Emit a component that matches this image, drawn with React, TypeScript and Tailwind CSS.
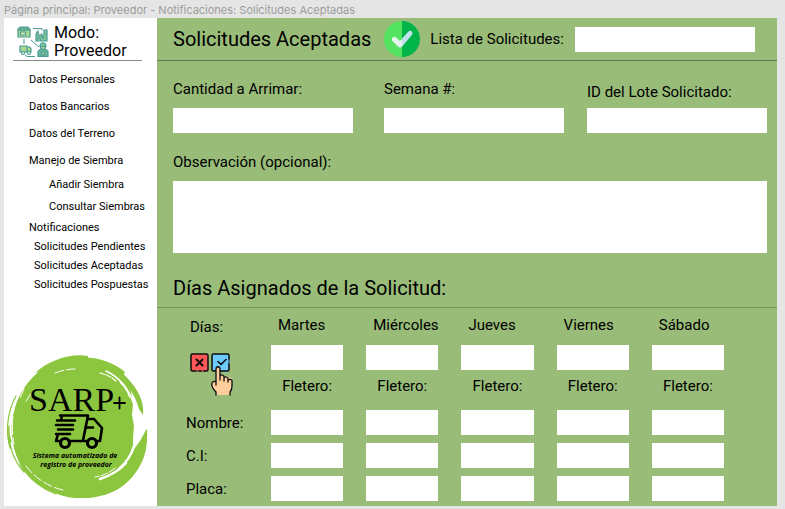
import React from "react";

const days = ["Martes", "Miércoles", "Jueves", "Viernes", "Sábado"];
const rows = ["Nombre:", "C.I:", "Placa:"];

const inputClass = "block h-[25px] w-full bg-white px-2 text-sm outline-none";

function SupplyIcon() {
  return (
    <svg viewBox="0 0 32 32" className="h-8 w-8 shrink-0" fill="#a9d88f" stroke="#4a9c95" strokeWidth="1.2" aria-hidden="true">
      <path d="M1 3h12v8H1z" />
      <path d="M1 4l2-3h8l2 3zM4 1v4M7 1v4M10 1v4" fill="#7dc49a" />
      <path d="M3.500 6h5v3h-5z" fill="#d9efb0" />
      <path d="M19 15V8l2-3 1 5 3-2v3l2-1V4h3v11z" fill="#7dc49a" />
      <path d="M21 15v-3h2v3M25 12h2" fill="#d9efb0" />
      <path d="M3 20h7v6H3zM10 21h3l1 2v3h-4z" />
      <circle cx="6" cy="27" r="1.500" fill="#fff" />
      <circle cx="12" cy="27" r="1.500" fill="#fff" />
      <path d="M21 30.500v-5l2-2h6l2 2v5z" fill="#6bb79a" />
      <circle cx="26" cy="21" r="2.500" />
      <path d="M23 20.500c0-5 6-5 6 0z" fill="#7dc49a" />
      <path d="M24.500 26h3v3h-3z" />
      <path d="M16 2.500h9v2M7 13v5M14 14l8 7M8 29l2 1.500h8" fill="none" strokeWidth="1" />
    </svg>
  );
}

function CheckBadge() {
  return (
    <svg viewBox="0 0 36 36" className="h-9 w-9 shrink-0" aria-hidden="true">
      <path d="M18 0a18 18 0 0 0 0 36z" fill="#54e360" />
      <path d="M18 0a18 18 0 0 1 0 36z" fill="#00b44a" />
      <path
        d="M18 18.500v7.300c-1.500 1.200-3 .8-4.200-.4l-5.200-5.200c-2.400-2.600 1-6 3.600-3.700l3.400 3.200z"
        fill="#e4f3ee"
      />
      <path d="M18 25.800v-8.300l6.500-7c2.500-2 5.300 1 3.300 3.500z" fill="#c3e1ea" />
    </svg>
  );
}

function ChooseIcon() {
  return (
    <svg viewBox="0 0 43 44" className="h-11 w-[43px]" stroke="#0b0b0b" strokeLinecap="round" strokeLinejoin="round" aria-hidden="true">
      <rect x="1" y="2" width="17" height="17" rx="1.500" fill="#ff5658" strokeWidth="1.500" />
      <path d="M6.500 7.500l6 6M12.500 7.500l-6 6" strokeWidth="2" />
      <rect x="22" y="2" width="17" height="17" rx="1.500" fill="#6dcbfb" strokeWidth="1.500" />
      <path d="M28 9.500l3 3 5-5" fill="none" strokeWidth="1.600" />
      <path d="M7 19h1M12 19h1" stroke="#ff8d8d" />
      <path d="M39 8v3M35 20.500h1" stroke="#6dcbfb" />
      <path d="M26 43v-3c-3-3-5-6-4-9 1-2 3-2 4-1V17c0-3 4-3 4 0v7c1-2 4-1 4 1 1-2 4-1 4 1 1-1 4-1 4 2v6c0 3-1 5-2 6v3z" fill="#fdcd9c" stroke="none" />
      <path d="M26 43v-3c-3-3-5-6-4-9 1-2 3-2 4-1v3-16c0-3 4-3 4 0v11-4c1-2 4-1 4 1v4-3c1-2 4-1 4 1v3-2c1-1 4-1 4 1v5c0 3-1 5-2 6v3" fill="none" strokeWidth="1.300" />
    </svg>
  );
}

function Logo() {
  return (
    <svg viewBox="0 0 144 144" className="h-36 w-36" role="img" aria-label="SARP+">
      <g fill="#8cc63e">
        <path d="M72 4c17-2 35 4 47 14l-2 4c4 5 7 10 8 16l2 12-1 11 2 11-1 12 1 10-5 11c-1 7-6 13-10 19-9 9-20 15-34 17-16 3-32-1-45-9C18 122 8 103 6 82 4 60 12 38 27 23 39 11 55 5 72 4z" />
        <path d="M92 7c16 3 29 14 38 28 5 8 8 16 7 26l-4-6c-3-11-8-20-16-28-7-8-15-13-25-16z" />
        <path d="M140 76l1-1c1 17-2 31-11 43-9 13-21 21-36 24-15 4-33 3-47-4l26-4c16-1 33-13 43-24 6-4 10-8 12-15l6-8z" />
        <path d="M82 2c-18-3-40 5-53 17l14-4c12-6 24-10 39-10z" />
      </g>
      <g fill="none" stroke="#8cc63e" strokeLinecap="round">
        <path d="M10 42C0 60 0 80 4 94M3 72c-1 18 4 34 15 46M14 110c8 14 22 25 36 30M2 75l3 13" strokeWidth="1.200" />
      </g>
      <g fill="none" stroke="#fff" strokeLinecap="round">
        <path d="M100 17c13 6 22 17 27 31" strokeWidth="1.500" />
        <path d="M114 28c5 5 8 10 10 16M94 19c8 2 13 5 17 9" strokeWidth="1.200" strokeDasharray="5 1.500" />
        <path d="M127 46c4 14 4 30 1 44" strokeWidth="2" />
        <path d="M130 54c3 12 2 23 0 33" strokeWidth="4" />
        <path d="M128 92c-3 10-8 17-15 23M120 109c-8 9-17 13-26 16" strokeWidth="2.500" />
        <path d="M109 114c-7 6-14 8-20 9" strokeWidth="1" strokeDasharray="7 2" />
        <path d="M12 42C6 56 5 74 8 90" strokeWidth="1" strokeDasharray="18 3" />
        <path d="M20 112c10 13 23 21 37 24M18 35l-4 9M49 19c8-3 14-4 20-4M20 47l6-9" strokeWidth="1" strokeDasharray="9 3" />
      </g>
      <g fill="#000">
        <text x="23" y="57" fontSize="34" fontFamily="'Liberation Serif', serif">SARP</text>
        <g fontSize="7" fontWeight="700" fontStyle="italic" fontFamily="'Open Sans', sans-serif" textAnchor="middle">
          <text x="69" y="104">Sistema automatizado de</text>
          <text x="70" y="113">registro de proveedor</text>
        </g>
      </g>
      <g fill="none" stroke="#000" strokeLinejoin="round" strokeLinecap="round">
        <path d="M108 49h11M113.500 43.500v11" strokeWidth="1.800" />
        <path d="M54 61.500h28l-5 25M51 66.500h18M50 71h17M52 75.500h15M50 80h14M56 62l-1 4M52 80l-2 7h4M64 87h17M82 65h6l8 9-2 13h-3M80 73.500h7" strokeWidth="2.600" />
        <circle cx="59" cy="89" r="4.500" strokeWidth="3.200" />
        <circle cx="86" cy="89" r="4.500" strokeWidth="3.200" />
      </g>
    </svg>
  );
}

function NavLink({ children }: { children: React.ReactNode }) {
  return (
    <a href="#" className="block whitespace-nowrap">
      {children}
    </a>
  );
}

function Sidebar() {
  return (
    <aside className="flex w-[153px] shrink-0 flex-col bg-white">
      <div className="ml-[9px] mr-[15px] flex h-[43px] items-end gap-[5px] border-b border-[#8a8a8a] pl-1">
        <div className="pb-0.5">
          <SupplyIcon />
        </div>
        <p className="text-base leading-[18px]">
          Modo:
          <br />
          Proveedor
        </p>
      </div>
      <nav className="flex-1 pl-[25px] pt-[11px] text-[11px] leading-4" aria-label="Proveedor">
        <ul className="space-y-[11px]">
          <li><NavLink>Datos Personales</NavLink></li>
          <li><NavLink>Datos Bancarios</NavLink></li>
          <li><NavLink>Datos del Terreno</NavLink></li>
          <li>
            <NavLink>Manejo de Siembra</NavLink>
            <ul className="space-y-1.5 pl-5 pt-2">
              <li><NavLink>Añadir Siembra</NavLink></li>
              <li><NavLink>Consultar Siembras</NavLink></li>
            </ul>
          </li>
        </ul>
        <div className="pt-[5px]">
          <NavLink>Notificaciones</NavLink>
          <ul className="space-y-[3px] pl-[5px] pt-[3px]">
            <li><NavLink>Solicitudes Pendientes</NavLink></li>
            <li><NavLink>Solicitudes Aceptadas</NavLink></li>
            <li><NavLink>Solicitudes Pospuestas</NavLink></li>
          </ul>
        </div>
      </nav>
      <div className="pb-2 pl-0.5">
        <Logo />
      </div>
    </aside>
  );
}

export default function App() {
  return (
    <div className="flex min-h-screen flex-col bg-[#e5e5e5] pb-[3px] pl-1 pr-2 font-['Roboto',sans-serif] text-black">
      <p className="h-[18px] font-['Inter',sans-serif] text-[11px] leading-5 text-[#9c9c9c]">
        Página principal: Proveedor - Notificaciones: Solicitudes Aceptadas
      </p>
      <div className="flex flex-1">
        <Sidebar />
        <main className="min-w-0 flex-1 bg-[#9abc79] text-[15px] leading-5">
          <header className="flex h-[43px] items-center border-b border-[#5f7850] pl-4 pr-[22px]">
            <h1 className="whitespace-nowrap text-xl">Solicitudes Aceptadas</h1>
            <div className="pl-[13px]">
              <CheckBadge />
            </div>
            <label htmlFor="lista" className="whitespace-nowrap pl-2.5 pr-[11px]">Lista de Solicitudes:</label>
            <input id="lista" className="h-[25px] min-w-0 flex-1 bg-white px-2 text-sm outline-none" />
          </header>

          <section className="pl-4 pr-2.5 pt-[18px]">
            <div className="grid grid-cols-[211fr_203fr_180fr] items-end">
              <div className="space-y-[9px] pr-[31px]">
                <label htmlFor="cantidad" className="block">Cantidad a Arrimar:</label>
                <input id="cantidad" className={inputClass} />
              </div>
              <div className="space-y-[9px] pr-[23px]">
                <label htmlFor="semana" className="block">Semana #:</label>
                <input id="semana" className={inputClass} />
              </div>
              <div className="space-y-1.5">
                <label htmlFor="lote" className="block">ID del Lote Solicitado:</label>
                <input id="lote" className={inputClass} />
              </div>
            </div>
            <label htmlFor="observacion" className="block pb-[9px] pt-[19px]">Observación (opcional):</label>
            <textarea id="observacion" className="block h-[72px] w-full resize-none bg-white p-2 text-sm outline-none" />
          </section>

          <section>
            <h2 className="border-b border-[#75935d] pb-[5px] pl-4 pt-[21px] text-xl">Días Asignados de la Solicitud:</h2>
            <div className="grid grid-cols-[62px_repeat(5,minmax(0,1fr))] gap-x-[23px] pb-[5px] pl-[29px] pr-[53px] pt-[7px]">
              <div className="pl-1">
                <p className="pb-[15px] pt-0.5">Días:</p>
                <ChooseIcon />
              </div>
              {days.map((day) => (
                <div key={day}>
                  <label htmlFor={day} className="block pb-2.5 pl-[7px]">{day}</label>
                  <input id={day} className={inputClass} />
                  <p className="pt-1.5 text-center">Fletero:</p>
                </div>
              ))}
            </div>
            <div className="grid grid-cols-[62px_repeat(5,minmax(0,1fr))] items-center gap-x-[23px] gap-y-2 pb-[5px] pl-[29px] pr-[53px] pt-[9px]">
              {rows.map((row) => (
                <React.Fragment key={row}>
                  <span>{row}</span>
                  {days.map((day) => (
                    <input key={day} aria-label={`${row} ${day}`} className={inputClass} />
                  ))}
                </React.Fragment>
              ))}
            </div>
          </section>
        </main>
      </div>
    </div>
  );
}
